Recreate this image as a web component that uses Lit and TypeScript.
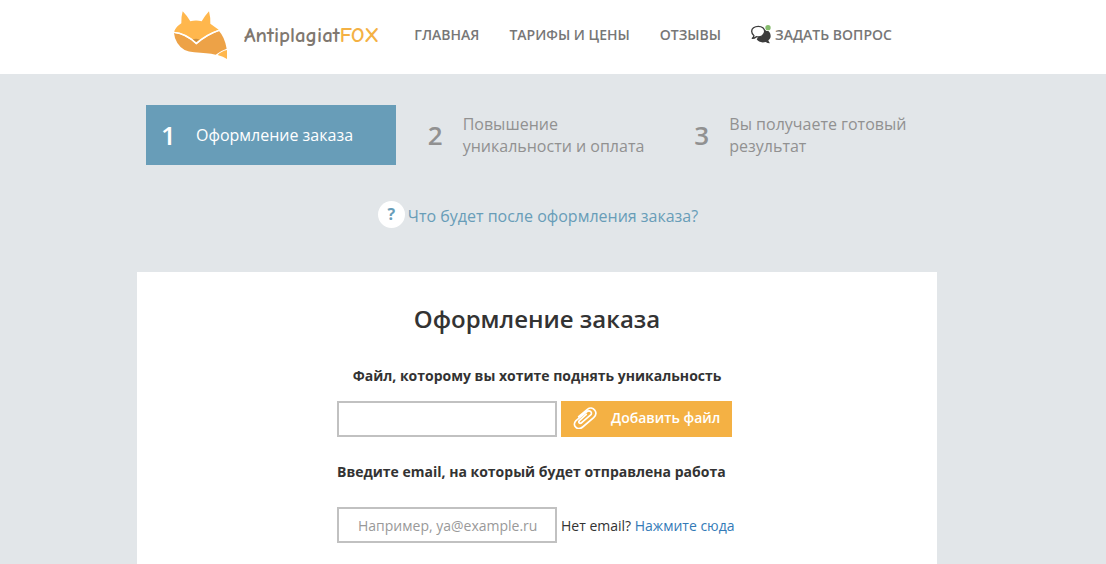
import { LitElement, html, css } from "lit";
import { customElement, state } from "lit/decorators.js";
import { classMap } from "lit/directives/class-map.js";

interface Step {
  title: string;
}

const STEPS: Step[] = [
  { title: "Оформление заказа" },
  { title: "Повышение уникальности и оплата" },
  { title: "Вы получаете готовый результат" },
];

@customElement("site-header")
export class SiteHeader extends LitElement {
  static styles = css`
    :host {
      display: block;
      background: #fff;
    }
    .bar {
      display: flex;
      align-items: center;
      max-width: 800px;
      height: 74px;
      margin: 0 auto;
      padding-left: 37px;
      box-sizing: border-box;
    }
    a {
      text-decoration: none;
      color: inherit;
    }
    .logo {
      display: flex;
      align-items: center;
      gap: 17px;
      margin: 0 35px 4px 0;
      font: 700 21px/28px "Comic Sans MS", "Comic Neue", "Open Sans", sans-serif;
      color: #807870;
      white-space: nowrap;
    }
    .fox {
      display: block;
      width: 53px;
      height: 48px;
    }
    .accent {
      color: #f4b144;
    }
    nav {
      display: flex;
      gap: 30px;
      margin-bottom: 4px;
      font-size: 14px;
      line-height: 20px;
      font-weight: 600;
      color: #777;
      white-space: nowrap;
    }
    .ask {
      display: flex;
      align-items: center;
      gap: 4px;
    }
    .chat {
      display: block;
      width: 20px;
      height: 20px;
    }
  `;

  render() {
    return html`
      <header class="bar">
        <a class="logo" href="#">
          <svg class="fox" viewBox="27 17 159 144" aria-hidden="true">
            <path fill="#ffb74d" d="M53 18 Q66 31 76 48 Q93 43 110 48 Q120 31 132 18 Q137 38 136 55 L161 73 Q124 85 94 111 Q64 82 27 79 Q34 63 49 54 Q48 36 53 18Z" />
            <path fill="#eda247" d="M27 83 Q62 87 94 117 Q126 89 162 77 Q179 95 185 130 Q165 137 152 148 Q127 143 88 141 Q54 140 37 113 Q28 98 27 83Z" />
            <path fill="#ffb74d" d="M158 149 Q168 138 186 134 L186 161 Q175 154 158 149Z" />
            <path fill="none" stroke="#fff" stroke-width="4" d="M27 81 Q62 84 94 115 Q126 87 162 75" />
            <path fill="#c98f42" d="M83 102 Q93 98 103 102 L94 110Z" />
          </svg>
          <span>Antiplagiat<span class="accent">FOX</span></span>
        </a>
        <nav>
          <a href="#">ГЛАВНАЯ</a>
          <a href="#">ТАРИФЫ И ЦЕНЫ</a>
          <a href="#">ОТЗЫВЫ</a>
          <a class="ask" href="#">
            <svg class="chat" viewBox="0 0 60 60" aria-hidden="true">
              <path fill="#3c3c3c" d="M38 14 C52 14 59 22 59 33 C59 39 56 43 52 46 Q53 51 57 55 Q49 55 44 51 C32 54 22 51 17 43 Z" />
              <path fill="#fff" stroke="#3c3c3c" stroke-width="4" stroke-linejoin="round" d="M22 4 C10 4 2 11 2 19 C2 25 5 29 9 32 Q8 37 4 40 Q11 40 16 35 C30 38 41 30 41 19 C41 11 33 4 22 4Z" />
              <circle cx="51" cy="8" r="10" fill="#fff" />
              <circle cx="51" cy="8" r="8" fill="#85bb6c" />
            </svg>
            ЗАДАТЬ ВОПРОС
          </a>
        </nav>
      </header>
    `;
  }
}

@customElement("order-steps")
export class OrderSteps extends LitElement {
  @state() private current = 0;

  static styles = css`
    :host {
      display: block;
    }
    .steps {
      display: grid;
      grid-template-columns: repeat(3, 1fr);
      gap: 17px;
      margin: 0;
      padding: 0 8px 0 9px;
      list-style: none;
    }
    .step {
      display: grid;
      grid-template-columns: 35px 1fr;
      align-items: center;
      min-height: 60px;
      padding: 0 15px;
      box-sizing: border-box;
      font-size: 16px;
      line-height: 22px;
      color: #919191;
    }
    .number {
      font-size: 26px;
      line-height: 36px;
      font-weight: 600;
    }
    .active {
      background: #689db8;
      color: #fff;
    }
  `;

  render() {
    return html`
      <ol class="steps">
        ${STEPS.map(
          (step, i) => html`
            <li class=${classMap({ step: true, active: i === this.current })}>
              <span class="number">${i + 1}</span>
              <span>${step.title}</span>
            </li>
          `
        )}
      </ol>
    `;
  }
}

@customElement("order-form")
export class OrderForm extends LitElement {
  static styles = css`
    :host {
      display: block;
      background: #fff;
    }
    form {
      display: flex;
      flex-direction: column;
      align-items: center;
      padding: 29px 20px 40px;
    }
    h1 {
      margin: 0 0 29px;
      font-size: 24px;
      line-height: 36px;
      font-weight: 600;
    }
    .label {
      font-size: 14px;
      line-height: 20px;
      font-weight: 700;
    }
    .field {
      display: grid;
      grid-template-columns: 220px auto;
      justify-content: start;
      align-items: center;
      gap: 4px;
      width: 400px;
      max-width: 100%;
    }
    .file {
      margin: 15px 0 25px;
    }
    .email {
      margin-top: 25px;
    }
    .wide {
      width: 400px;
      max-width: 100%;
    }
    input {
      width: 100%;
      height: 36px;
      box-sizing: border-box;
      border: 2px solid #c1c1c1;
      border-radius: 0;
      padding: 0 12px 0 19px;
      background: #fff;
      font: 14px/20px "Open Sans", sans-serif;
      color: #333;
      outline: none;
    }
    input::placeholder {
      color: #999;
      opacity: 1;
    }
    .add {
      display: flex;
      align-items: center;
      gap: 14px;
      height: 36px;
      padding: 0 12px 2px 12px;
      border: 0;
      background: #f4b144;
      color: #fff;
      font: 600 14px/20px "Open Sans", sans-serif;
      white-space: nowrap;
      cursor: pointer;
    }
    .clip {
      display: block;
      width: 24px;
      height: 22px;
    }
    .hint {
      padding-top: 2px;
      font-size: 14px;
      line-height: 20px;
      white-space: nowrap;
    }
    .hint a {
      color: #337ab7;
      text-decoration: none;
    }
  `;

  render() {
    return html`
      <form @submit=${(e: Event) => e.preventDefault()}>
        <h1>Оформление заказа</h1>
        <label class="label" for="file">Файл, которому вы хотите поднять уникальность</label>
        <div class="field file">
          <input id="file" type="text" />
          <button class="add" type="button">
            <svg class="clip" viewBox="0 0 72 66" fill="none" stroke="#fff" stroke-width="5" stroke-linecap="round" aria-hidden="true">
              <path d="M26 47 L53 24 C60 16 50 8 42 14 L9 41 C-5 55 14 73 29 60 L62 32 C78 16 60 -5 43 7 L17 29" />
              <path d="M26 47 C20 52 14 46 20 40 L40 22" />
            </svg>
            Добавить файл
          </button>
        </div>
        <label class="label wide" for="email">Введите email, на который будет отправлена работа</label>
        <div class="field email">
          <input id="email" type="email" placeholder="Например, ya@example.ru" />
          <span class="hint">Нет email? <a href="#">Нажмите сюда</a></span>
        </div>
      </form>
    `;
  }
}

@customElement("app-root")
export class AppRoot extends LitElement {
  static styles = css`
    :host {
      display: block;
      min-height: 100vh;
      background: #e2e6e9;
      font-family: "Open Sans", sans-serif;
      color: #333;
    }
    site-header {
      padding-right: 32px;
    }
    main {
      padding: 31px 32px 0 0;
    }
    .column {
      max-width: 800px;
      margin: 0 auto;
    }
    .help {
      display: flex;
      justify-content: center;
      align-items: flex-start;
      gap: 3px;
      margin: 36px 0 41px;
      padding-left: 2px;
      font-size: 16px;
      line-height: 30px;
      color: #689db8;
      text-decoration: none;
    }
    .mark {
      width: 27px;
      height: 27px;
      border-radius: 50%;
      background: #fff;
      font-weight: 700;
      line-height: 27px;
      text-align: center;
    }
  `;

  render() {
    return html`
      <site-header></site-header>
      <main>
        <div class="column">
          <order-steps></order-steps>
          <a class="help" href="#"><span class="mark">?</span>Что будет после оформления заказа?</a>
          <order-form></order-form>
        </div>
      </main>
    `;
  }
}
